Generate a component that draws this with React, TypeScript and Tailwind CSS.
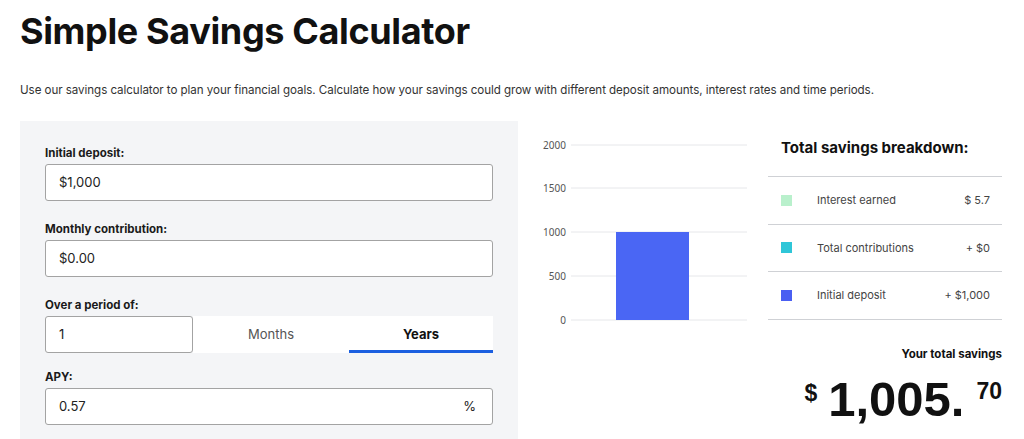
import React from "react";

const rows = [
  { color: "bg-[#b9f0cc]", label: "Interest earned", value: "$ 5.7" },
  { color: "bg-[#2fc6d8]", label: "Total contributions", value: "+ $0" },
  { color: "bg-[#4a5ff2]", label: "Initial deposit", value: "+ $1,000" },
];

function Field({ label, value, suffix }: { label: string; value: string; suffix?: string }) {
  return (
    <div>
      <div className="text-[11.5px] font-bold leading-[18px] text-[#1a1a1a]">{label}</div>
      <div className="mt-[2px] flex h-[37px] items-center justify-between rounded-[3px] border border-[#a3a3a3] bg-white px-[13px] text-[13px] text-[#222]">
        <span>{value}</span>
        {suffix && <span className="pr-[3px]">{suffix}</span>}
      </div>
    </div>
  );
}

function Chart() {
  const ticks = [
    { v: "2000", y: 24 },
    { v: "1500", y: 67 },
    { v: "1000", y: 111 },
    { v: "500", y: 155 },
    { v: "0", y: 199 },
  ];
  return (
    <svg width="250" height="220" viewBox="0 0 250 220" className="block">
      {ticks.map((t) => (
        <g key={t.v}>
          <line x1="53" x2="229" y1={t.y} y2={t.y} stroke="#e6e7ea" strokeWidth="1" />
          <text x="48" y={t.y + 3.5} textAnchor="end" fontSize="10" fill="#555" fontFamily="'Noto Sans', sans-serif">
            {t.v}
          </text>
        </g>
      ))}
      <rect x="98" y="111" width="73" height="88" fill="#4a66f4" />
    </svg>
  );
}

export default function App() {
  return (
    <div className="min-h-screen bg-white px-5 font-['Inter',sans-serif] text-[#111]">
      <h1 className="pt-[9px] text-[36px] font-bold leading-[44px] tracking-[-0.01em] text-[#111]">
        Simple Savings Calculator
      </h1>
      <p className="mt-[28px] text-[11.6px] leading-[18px] tracking-[-0.005em] text-[#333]">
        Use our savings calculator to plan your financial goals. Calculate how your savings could grow with different deposit amounts, interest rates and time periods.
      </p>
      <div className="mt-[22px] flex">
        <div className="w-[498px] shrink-0 bg-[#f4f5f7] px-[25px] pt-[23px] pb-6">
          <Field label="Initial deposit:" value="$1,000" />
          <div className="mt-[19px]">
            <Field label="Monthly contribution:" value="$0.00" />
          </div>
          <div className="mt-[19px]">
            <div className="text-[11.5px] font-bold leading-[18px] text-[#1a1a1a]">Over a period of:</div>
            <div className="mt-[2px] flex h-[37px]">
              <div className="flex w-[148px] items-center rounded-[3px] border border-[#a3a3a3] bg-white px-[13px] text-[13px] text-[#222]">
                1
              </div>
              <div className="flex flex-1 bg-white">
                <div className="flex w-[156px] items-center justify-center text-[13px] text-[#555]">Months</div>
                <div className="flex flex-1 items-center justify-center border-b-[3px] border-[#1b5fe0] pt-[3px] text-[13px] font-bold text-[#111]">
                  Years
                </div>
              </div>
            </div>
          </div>
          <div className="mt-[15px]">
            <Field label="APY:" value="0.57" suffix="%" />
          </div>
        </div>
        <div className="w-[250px] shrink-0">
          <Chart />
        </div>
        <div className="w-[234px] shrink-0">
          <div className="flex h-[55px] items-center pl-[13px] text-[15px] font-bold text-[#111]">
            Total savings breakdown:
          </div>
          <div className="border-t border-[#cfd1d5]">
            {rows.map((r) => (
              <div key={r.label} className="flex h-[47.5px] items-center border-b border-[#cfd1d5] pr-[12px] pl-[13px] text-[11px] text-[#444]">
                <span className={`h-[11px] w-[11px] ${r.color}`} />
                <span className="ml-[25px] flex-1">{r.label}</span>
                <span>{r.value}</span>
              </div>
            ))}
          </div>
          <div className="mt-[26px] text-right text-[11.5px] font-bold text-[#111]">Your total savings</div>
          <div className="mt-[14px] flex items-start justify-end font-['Liberation_Sans',sans-serif] font-bold text-[#111]">
            <span className="mt-[5px] text-[23px] leading-none">$</span>
            <span className="ml-[11px] text-[49px] leading-[44px]">1,005.</span>
            <span className="ml-[12px] mt-[3px] text-[23px] leading-none">70</span>
          </div>
        </div>
      </div>
    </div>
  );
}
